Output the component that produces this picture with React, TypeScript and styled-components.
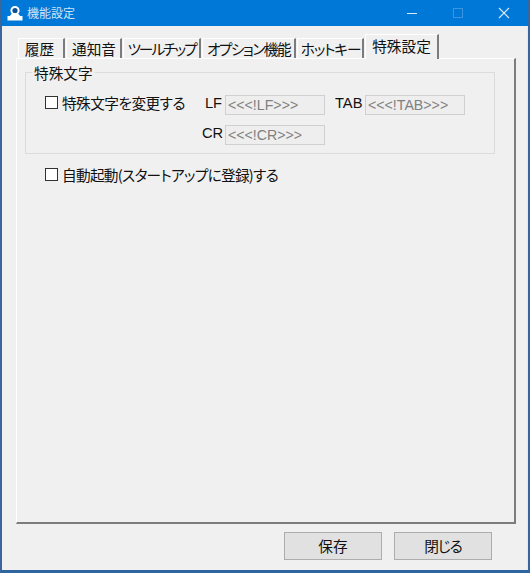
import styled, { createGlobalStyle } from 'styled-components';

const GlobalStyle = createGlobalStyle`
  html, body {
    margin: 0;
    padding: 0;
    background: #f0f0f0;
  }
`;

const font = `"Noto Sans CJK JP", "Liberation Sans", sans-serif`;

const Window = styled.div`
  width: 530px;
  height: 573px;
  box-sizing: border-box;
  display: flex;
  flex-direction: column;
  background: #f0f0f0;
  border-left: 2px solid #3b669c;
  border-right: 2px solid #3b669c;
  border-bottom: 3px solid #2f659f;
  box-shadow: inset -1px 0 0 #d4effb;
  font-family: ${font};
  font-feature-settings: "palt";
  color: #111;
  overflow: hidden;
`;

const TitleBar = styled.div`
  height: 26px;
  margin: 0 -2px;
  flex: none;
  display: flex;
  align-items: center;
  background: #0078d7;
  color: #cfe4f7;
  font-size: 12px;
  line-height: 24px;
  padding: 0 3px 0 7px;
  box-sizing: border-box;
`;

const TitleText = styled.span`
  margin-left: 4px;
  flex: 1;
`;

const WinButton = styled.div`
  width: 46px;
  height: 24px;
  display: flex;
  align-items: center;
  justify-content: center;
`;

const Body = styled.div`
  flex: 1;
  display: flex;
  flex-direction: column;
  padding: 8px 12px 0 14px;
`;

const TabStrip = styled.div`
  display: flex;
  align-items: flex-end;
  height: 24px;
  padding-left: 2px;
  position: relative;
  z-index: 1;
`;

const Tab = styled.div<{ $w: number; $ls?: number; $shift?: number; $active?: boolean }>`
  width: ${p => p.$w}px;
  box-sizing: border-box;
  height: ${p => (p.$active ? 25 : 20)}px;
  margin-bottom: ${p => (p.$active ? -1 : 0)}px;
  margin-right: ${p => (p.$active ? 0 : 1)}px;
  padding-bottom: ${p => (p.$active ? 3 : 1)}px;
  padding-left: ${p => (p.$shift && p.$shift > 0 ? p.$shift : 0)}px;
  padding-right: ${p => (p.$shift && p.$shift < 0 ? -p.$shift : 0)}px;
  display: flex;
  align-items: center;
  justify-content: center;
  font-size: 14.67px;
  letter-spacing: ${p => p.$ls ?? 0}px;
  white-space: nowrap;
  background: #f0f0f0;
  border-top: 1px solid #fff;
  border-left: 1px solid #fff;
  border-right: 2px solid #7c7c7c;
`;

const Panel = styled.div`
  height: 466px;
  flex: none;
  box-sizing: border-box;
  border-top: 1px solid #fff;
  border-left: 1px solid #fff;
  border-right: 2px solid #7c7c7c;
  border-bottom: 2px solid #7c7c7c;
  padding: 13px 19px 0 8px;
`;

const GroupBox = styled.div`
  box-sizing: border-box;
  height: 82px;
  border: 1px solid #dcdcdc;
  position: relative;
`;

const GroupLabel = styled.div`
  position: absolute;
  left: 6px;
  top: -9px;
  padding: 0 2px;
  line-height: 17px;
  background: #f0f0f0;
  font-size: 14.67px;
`;

const GroupGrid = styled.div`
  display: grid;
  grid-template-columns: 157px 23px 100px 10px 30px 100px;
  grid-template-rows: 20px 20px;
  row-gap: 10px;
  padding: 22px 0 0 19px;
  align-items: center;
`;

const CheckRow = styled.label`
  display: flex;
  align-items: center;
  font-size: 14.67px;
  white-space: nowrap;
`;

const CheckBox = styled.span`
  width: 13px;
  height: 13px;
  flex: none;
  box-sizing: border-box;
  border: 1px solid #333;
  background: #fff;
  margin-right: 4px;
`;

const CheckLabel = styled.span<{ $ls: number }>`
  letter-spacing: ${p => p.$ls}px;
`;

const GroupCheck = styled(CheckRow)`
  margin-bottom: 6px;
`;

const FieldLabel = styled.span<{ $col: number; $row: number }>`
  grid-column: ${p => p.$col};
  grid-row: ${p => p.$row};
  font-family: "Liberation Sans", sans-serif;
  font-size: 14.67px;
  text-align: right;
  padding-right: 3px;
  margin-bottom: 4px;
`;

const Field = styled.div<{ $col: number; $row: number }>`
  grid-column: ${p => p.$col};
  grid-row: ${p => p.$row};
  height: 20px;
  box-sizing: border-box;
  border: 1px solid #d0d0d0;
  background: #eeeeee;
  color: #808080;
  font-family: "Liberation Sans", sans-serif;
  font-size: 14.2px;
  line-height: 18px;
  padding-left: 2px;
  white-space: nowrap;
  overflow: hidden;
`;

const AutoRow = styled(CheckRow)`
  margin: 10px 0 0 20px;
`;

const Footer = styled.div`
  display: flex;
  justify-content: flex-end;
  gap: 12px;
  padding: 8px 24px 0 0;
`;

const Button = styled.button<{ $ls?: number }>`
  width: 98px;
  height: 28px;
  box-sizing: border-box;
  padding: 0 0 2px;
  border: 1px solid #adadad;
  background: #e1e1e1;
  color: #111;
  font-family: ${font};
  font-feature-settings: "palt";
  font-size: 14.67px;
  letter-spacing: ${p => p.$ls ?? 0}px;
`;

export default function App() {
  return (
    <>
      <GlobalStyle />
      <Window>
        <TitleBar>
          <svg width="16" height="16" viewBox="0 0 16 16">
            <rect x="0.5" y="11" width="15" height="4.5" fill="#fff" />
            <circle cx="8" cy="5.5" r="3.6" fill="#0a4f96" stroke="#fff" strokeWidth="2" />
            <path d="M2 12 L4.5 9 H11.5 L14 12 Z" fill="#fff" />
          </svg>
          <TitleText>機能設定</TitleText>
          <WinButton>
            <svg width="10" height="10" viewBox="0 0 10 10">
              <path d="M0 5.5 H10" stroke="#d8eafa" />
            </svg>
          </WinButton>
          <WinButton>
            <svg width="10" height="10" viewBox="0 0 10 10">
              <rect x="0.5" y="0.5" width="9" height="9" fill="none" stroke="#3b94e0" />
            </svg>
          </WinButton>
          <WinButton>
            <svg width="12" height="12" viewBox="0 0 12 12">
              <path d="M1 1 L11 11 M11 1 L1 11" stroke="#d8eafa" strokeWidth="1.1" />
            </svg>
          </WinButton>
        </TitleBar>
        <Body>
          <TabStrip>
            <Tab $w={47} $shift={-3}>履歴</Tab>
            <Tab $w={56} $shift={1}>通知音</Tab>
            <Tab $w={78} $ls={-2}>ツールチップ</Tab>
            <Tab $w={94} $ls={-1.5}>オプション機能</Tab>
            <Tab $w={67} $ls={-1.1} $shift={1}>ホットキー</Tab>
            <Tab $w={74} $active>特殊設定</Tab>
          </TabStrip>
          <Panel>
            <GroupBox>
              <GroupLabel>特殊文字</GroupLabel>
              <GroupGrid>
                <GroupCheck>
                  <CheckBox />
                  <CheckLabel $ls={-0.55}>特殊文字を変更する</CheckLabel>
                </GroupCheck>
                <FieldLabel $col={2} $row={1}>LF</FieldLabel>
                <Field $col={3} $row={1}>&lt;&lt;&lt;!LF&gt;&gt;&gt;</Field>
                <FieldLabel $col={5} $row={1}>TAB</FieldLabel>
                <Field $col={6} $row={1}>&lt;&lt;&lt;!TAB&gt;&gt;&gt;</Field>
                <FieldLabel $col={2} $row={2}>CR</FieldLabel>
                <Field $col={3} $row={2}>&lt;&lt;&lt;!CR&gt;&gt;&gt;</Field>
              </GroupGrid>
            </GroupBox>
            <AutoRow>
              <CheckBox />
              <CheckLabel $ls={-0.7}>自動起動(スタートアップに登録)する</CheckLabel>
            </AutoRow>
          </Panel>
          <Footer>
            <Button>保存</Button>
            <Button $ls={-1}>閉じる</Button>
          </Footer>
        </Body>
      </Window>
    </>
  );
}
